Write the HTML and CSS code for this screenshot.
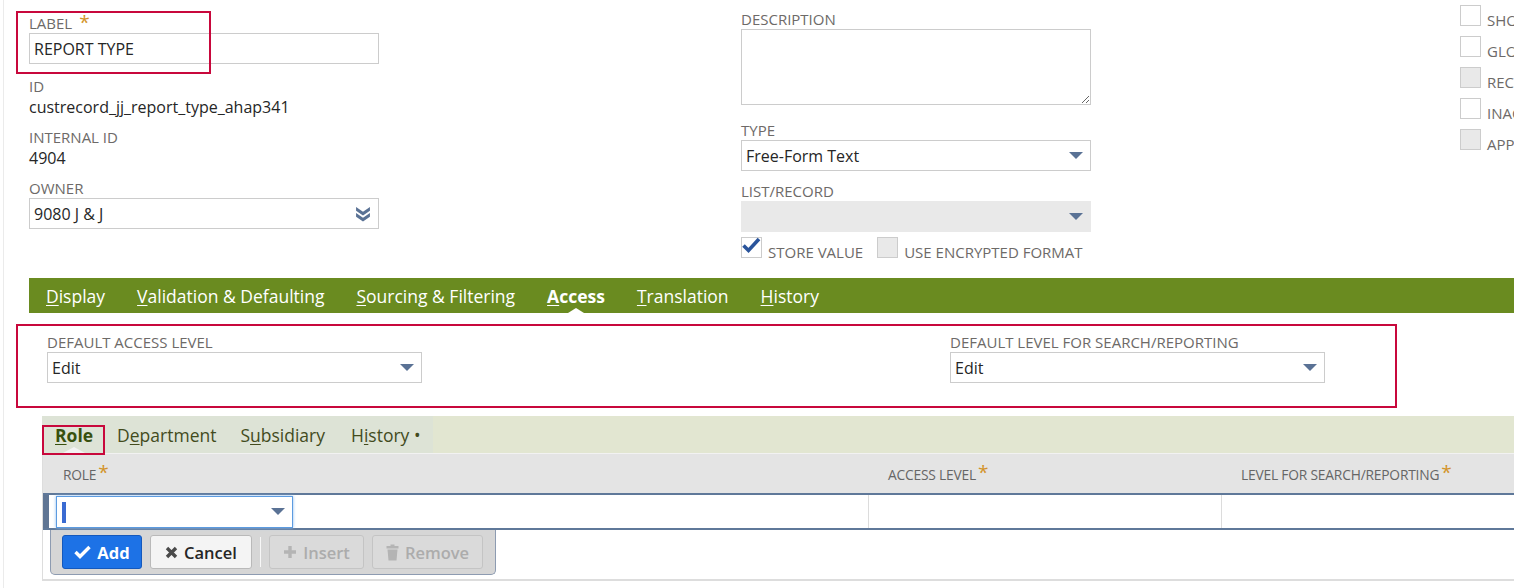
FILE: index.html
```html
<!DOCTYPE html>
<html lang="en">
<head>
  <meta charset="UTF-8">
  <title>Custom Record Field</title>
  <link rel="stylesheet" href="styles.css">
</head>
<body>
  <div class="page">
    <div class="top">
      <div class="col col-main">
        <div class="field">
          <span class="note note-label"></span>
          <div class="lbl">LABEL<span class="req">*</span></div>
          <div class="input">REPORT TYPE</div>
        </div>
        <div class="field">
          <div class="lbl">ID</div>
          <div class="val">custrecord_jj_report_type_ahap341</div>
        </div>
        <div class="field">
          <div class="lbl">INTERNAL ID</div>
          <div class="val">4904</div>
        </div>
        <div class="field">
          <div class="lbl">OWNER</div>
          <div class="input select select-owner">
            <span>9080 J &amp; J</span>
            <svg class="chevrons" width="16" height="16" viewBox="0 0 15 15"><path d="M1 1L7.5 5.5L14 1V4.5L7.5 9L1 4.5Z"/><path d="M1 6.5L7.5 11L14 6.5V10L7.5 14.5L1 10Z"/></svg>
          </div>
        </div>
      </div>

      <div class="col col-desc">
        <div class="lbl">DESCRIPTION</div>
        <textarea class="textarea"></textarea>
        <div class="lbl lbl-type">TYPE</div>
        <div class="input select">
          <span>Free-Form Text</span>
          <svg class="caret-down" width="14" height="8" viewBox="0 0 14 8"><path d="M0 0H14L7 7Z"/></svg>
        </div>
        <div class="lbl lbl-list">LIST/RECORD</div>
        <div class="input select disabled">
          <span></span>
          <svg class="caret-down" width="14" height="8" viewBox="0 0 14 8"><path d="M0 0H14L7 7Z"/></svg>
        </div>
        <div class="checks">
          <span class="box">
            <svg width="21" height="21" viewBox="0 0 21 21"><path d="M2.5 8.5L7.5 13.5L18 2" fill="none" stroke="#2a549b" stroke-width="3.6"/></svg>
          </span>
          <span class="check-text">STORE VALUE</span>
          <span class="box box-off"></span>
          <span class="check-text">USE ENCRYPTED FORMAT</span>
        </div>
      </div>

      <div class="col col-flags">
        <div class="flag"><span class="box"></span><span class="check-text">SHOW IN LIST</span></div>
        <div class="flag"><span class="box"></span><span class="check-text">GLOBAL SEARCH</span></div>
        <div class="flag"><span class="box box-off"></span><span class="check-text">RECORD IS PARENT</span></div>
        <div class="flag"><span class="box"></span><span class="check-text">INACTIVE</span></div>
        <div class="flag"><span class="box box-off"></span><span class="check-text">APPLY FORMATTING</span></div>
      </div>
    </div>

    <div class="tabs">
      <span class="tab"><u>D</u>isplay</span>
      <span class="tab"><u>V</u>alidation &amp; Defaulting</span>
      <span class="tab"><u>S</u>ourcing &amp; Filtering</span>
      <span class="tab active"><u>A</u>ccess</span>
      <span class="tab"><u>T</u>ranslation</span>
      <span class="tab"><u>H</u>istory</span>
    </div>

    <div class="access">
      <div class="access-field">
        <div class="lbl">DEFAULT ACCESS LEVEL</div>
        <div class="input select">
          <span>Edit</span>
          <svg class="caret-down" width="14" height="8" viewBox="0 0 14 8"><path d="M0 0H14L7 7Z"/></svg>
        </div>
      </div>
      <div class="access-field access-field-right">
        <div class="lbl">DEFAULT LEVEL FOR SEARCH/REPORTING</div>
        <div class="input select">
          <span>Edit</span>
          <svg class="caret-down" width="14" height="8" viewBox="0 0 14 8"><path d="M0 0H14L7 7Z"/></svg>
        </div>
      </div>
    </div>

    <div class="subtabs">
      <span class="note note-role"></span>
      <div class="subtab-group">
        <span class="subtab active"><u>R</u>ole</span>
        <span class="subtab">D<u>e</u>partment</span>
        <span class="subtab">S<u>u</u>bsidiary</span>
        <span class="subtab">H<u>i</u>story •</span>
      </div>
    </div>

    <div class="sublist">
      <div class="sublist-head">
        <div class="th">ROLE<span class="req-sm">*</span></div>
        <div class="th">ACCESS LEVEL<span class="req-sm">*</span></div>
        <div class="th">LEVEL FOR SEARCH/REPORTING<span class="req-sm">*</span></div>
      </div>
      <div class="sublist-row">
        <div class="td td-first">
          <div class="role-select">
            <span class="text-cursor"></span>
            <svg class="caret-down" width="14" height="8" viewBox="0 0 14 8"><path d="M0 0H14L7 7Z"/></svg>
          </div>
        </div>
        <div class="td"></div>
        <div class="td"></div>
      </div>
      <div class="toolbar">
        <button class="btn btn-add">
          <svg width="17" height="14" viewBox="0 0 17 14"><path d="M1.5 7L6 11.5L15.5 2" fill="none" stroke="#fff" stroke-width="3.4"/></svg>
          Add
        </button>
        <button class="btn btn-cancel">
          <svg width="13" height="13" viewBox="0 0 13 13"><path d="M2 2L11 11M11 2L2 11" stroke="#4a4a4a" stroke-width="3.4"/></svg>
          Cancel
        </button>
        <span class="sep"></span>
        <button class="btn btn-off btn-insert">
          <svg width="14" height="14" viewBox="0 0 14 14"><path d="M7 1V13M1 7H13" stroke="#b4b4b4" stroke-width="3.4"/></svg>
          Insert
        </button>
        <button class="btn btn-off btn-remove">
          <svg width="13" height="17" viewBox="0 0 13 17"><path d="M4.5 0.5H8.5V2H12.5V4.5H0.5V2H4.5Z" fill="#b4b4b4"/><path d="M1.5 5.5H11.5L10.5 16.5H2.5Z" fill="#b4b4b4"/></svg>
          Remove
        </button>
      </div>
    </div>
  </div>
</body>
</html>
```

FILE: styles.css
```css
body {
  margin: 0;
  font-family: "Open Sans", "Liberation Sans", sans-serif;
  color: #262626;
  background: #fff;
  overflow: hidden;
}
.page {
  margin-left: 3px;
  border-left: 1px solid #ebebeb;
  height: 588px;
  overflow: hidden;
}

/* header fields */
.top {
  display: flex;
  height: 278px;
  padding-left: 25px;
}
.col {
  flex: none;
}
.col-main {
  width: 350px;
  padding-top: 14px;
}
.col-desc {
  width: 350px;
  margin-left: 362px;
  padding-top: 10px;
}
.col-flags {
  margin-left: 369px;
  padding-top: 5px;
  white-space: nowrap;
}
.field {
  position: relative;
  margin-bottom: 11px;
}
.lbl {
  font-size: 15px;
  line-height: 18px;
  color: #6d6a68;
  white-space: nowrap;
}
.req {
  color: #d39329;
  font-size: 19px;
  line-height: 0;
  margin-left: 7px;
}
.val {
  margin-top: 2px;
  font-size: 16px;
  line-height: 20px;
}
.input {
  box-sizing: border-box;
  height: 31px;
  margin-top: 1px;
  border: 1px solid #cccccc;
  font-size: 16px;
  padding: 0 7px 0 4px;
  display: flex;
  align-items: center;
  background: #fff;
}
.field:first-child {
  margin-bottom: 13px;
}
.select {
  justify-content: space-between;
}
.select-owner {
  margin-top: 1px;
  height: 31px;
}
.caret-down path,
.chevrons path {
  fill: #5a7295;
}
.disabled {
  background: #e9e9e9;
  border-color: #e9e9e9;
}
.note {
  position: absolute;
  border: 2px solid #c8083c;
  z-index: 2;
  pointer-events: none;
}
.note-label {
  left: -13px;
  top: -3px;
  width: 191px;
  height: 59px;
}
.textarea {
  display: block;
  box-sizing: border-box;
  width: 350px;
  height: 76px;
  margin: 1px 0 0;
  border: 1px solid #cccccc;
  font-family: inherit;
}
.lbl-type {
  margin-top: 16px;
}
.lbl-list {
  margin-top: 11px;
}
.checks {
  display: flex;
  align-items: flex-end;
  margin-top: 5px;
  white-space: nowrap;
}
.box {
  box-sizing: border-box;
  width: 21px;
  height: 21px;
  border: 1px solid #cccccc;
  background: #fff;
  flex: none;
}
.box svg {
  display: block;
  margin: -1px 0 0 -1px;
}
.box-off {
  background: #e9e9e9;
}
.check-text {
  flex: none;
  white-space: nowrap;
  font-size: 15px;
  line-height: 15px;
  color: #6d6a68;
  margin-left: 6px;
  margin-right: 14px;
  margin-bottom: -2px;
}
.flag {
  display: flex;
  align-items: flex-end;
  height: 21px;
  margin-bottom: 10px;
}

/* main tabs */
.tabs {
  display: flex;
  margin-left: 25px;
  height: 35px;
  padding-left: 1px;
  background: #6a8b20;
}
.tab {
  position: relative;
  padding: 0 16px;
  font-size: 17.5px;
  line-height: 37px;
  color: #fff;
  white-space: nowrap;
}
.tab u,
.subtab u {
  text-underline-offset: 2px;
  text-decoration-thickness: 1px;
}
.tab.active {
  font-weight: 700;
}
.tab.active::after {
  content: "";
  position: absolute;
  left: 50%;
  bottom: 0;
  margin-left: -8px;
  border-left: 8px solid transparent;
  border-right: 8px solid transparent;
  border-bottom: 5px solid #fff;
}

/* access defaults */
.access {
  display: flex;
  box-sizing: border-box;
  width: 1381px;
  height: 84px;
  margin: 11px 0 0 12px;
  padding: 7px 0 0 29px;
  border: 2px solid #c8083c;
}
.access-field {
  width: 375px;
  flex: none;
}
.access-field-right {
  margin-left: 528px;
}

/* sub tabs */
.subtabs {
  position: relative;
  display: flex;
  height: 37px;
  margin: 8px 0 0 38px;
  background: #e2e6d1;
}
.subtab-group {
  display: flex;
  padding-left: 1px;
  background: #dde3d6;
}
.subtab {
  position: relative;
  padding: 0 12px;
  font-size: 17.5px;
  line-height: 39px;
  color: #434b1d;
  white-space: nowrap;
}
.subtab:last-child {
  padding-left: 14px;
}
.subtab.active {
  font-weight: 700;
  color: #38500e;
}
.subtab.active::after {
  content: "";
  position: absolute;
  left: 50%;
  bottom: 0;
  margin-left: -11px;
  border-left: 11px solid transparent;
  border-right: 11px solid transparent;
  border-bottom: 6px solid #f3f3f3;
}
.note-role {
  left: 0;
  top: 9px;
  width: 59px;
  height: 26px;
}

/* sublist */
.sublist {
  margin-left: 38px;
  border-left: 1px solid #dddddd;
  border-bottom: 2px solid #dddddd;
  padding-bottom: 4px;
}
.sublist-head,
.sublist-row {
  display: grid;
  grid-template-columns: 825px 353px 1fr;
}
.sublist-head {
  box-sizing: border-box;
  height: 40px;
  border-top: 1px solid #f2f2f2;
  background: #e4e4e4;
}
.th {
  padding: 3px 0 0 20px;
  font-size: 13.8px;
  line-height: 36px;
  color: #666;
  letter-spacing: -0.2px;
  white-space: nowrap;
}
.req-sm {
  color: #d39329;
  font-size: 19px;
  line-height: 0;
  margin-left: 2px;
  vertical-align: 1px;
}
.sublist-row {
  height: 37px;
  box-sizing: border-box;
  border-top: 2px solid #5f7899;
  border-bottom: 2px solid #5f7899;
}
.td {
  border-left: 1px solid #dcdcdc;
}
.td-first {
  border-left: 6px solid #5f7594;
  padding: 1px 0 0 7px;
}
.role-select {
  box-sizing: border-box;
  width: 237px;
  height: 32px;
  border: 1px solid #5c9be0;
  box-shadow: 0 0 3px #8bbcf0;
  display: flex;
  align-items: center;
  justify-content: space-between;
  padding: 0 7px 0 5px;
}
.text-cursor {
  width: 4px;
  height: 21px;
  background: #3a6bd2;
}
.toolbar {
  display: flex;
  align-items: flex-start;
  gap: 8px;
  box-sizing: border-box;
  width: 446px;
  height: 45px;
  margin-left: 7px;
  padding: 5px 0 0 11px;
  background: #d6d6d6;
  border: 1px solid #8d9bb1;
  border-top: none;
  border-radius: 0 0 5px 5px;
}
.btn {
  display: flex;
  align-items: center;
  justify-content: center;
  gap: 6px;
  box-sizing: border-box;
  height: 34px;
  padding: 0;
  border: 1px solid #b9b9b9;
  border-radius: 3px;
  font-family: inherit;
  font-size: 16.5px;
  font-weight: 600;
  color: #262626;
  background: #f4f4f4;
}
.btn-add {
  width: 80px;
  background: #1d72e6;
  border-color: #1459bd;
  color: #fff;
  font-weight: 700;
}
.btn-cancel {
  width: 102px;
}
.btn-off {
  background: #dadada;
  border-color: #c4c4c4;
  color: #acacac;
}
.btn-insert {
  width: 95px;
}
.btn-remove {
  width: 111px;
}
.sep {
  width: 1px;
  height: 30px;
  margin-top: 2px;
  background: #f7f7f7;
}
```
